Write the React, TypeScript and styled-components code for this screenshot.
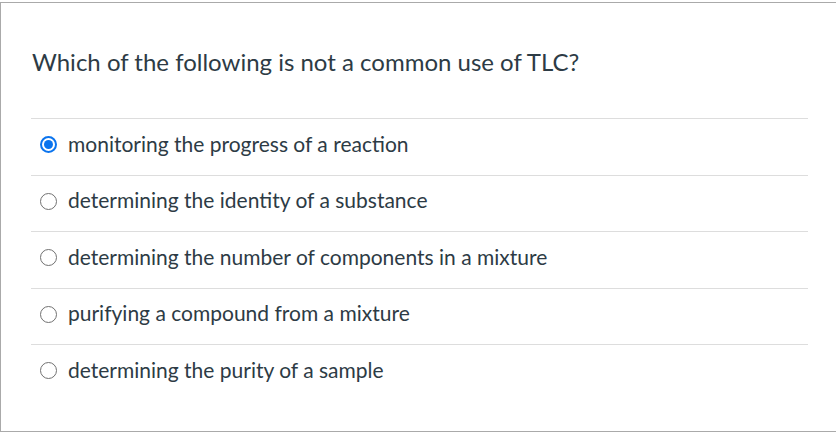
import React from "react";
import styled, { createGlobalStyle } from "styled-components";

const Global = createGlobalStyle`
  html, body { margin: 0; padding: 0; background: #ffffff; }
  body { font-family: Lato, "Open Sans", sans-serif; color: #2d3b45; }
`;

const Page = styled.div`
  width: 836px;
  height: 440px;
  overflow: hidden;
  padding-top: 2px;
  box-sizing: border-box;
`;

const Card = styled.div`
  width: 860px;
  height: 430px;
  box-sizing: border-box;
  border-top: 1px solid #aaaaaa;
  border-left: 1px solid #aaaaaa;
  border-bottom: 1px solid #aaaaaa;
  padding: 0 0 0 30px;
`;

const Question = styled.div`
  font-size: 24px;
  line-height: 30px;
  padding: 44px 0 41px 1px;
`;

const Options = styled.ul`
  list-style: none;
  margin: 0;
  padding: 0;
  width: 777px;
`;

const Option = styled.li`
  display: flex;
  align-items: center;
  gap: 11px;
  height: 56.5px;
  border-top: 1px solid #dddddd;
  padding: 0 0 6px 8px;
  box-sizing: border-box;
  font-size: 21px;
`;

const RadioSlot = styled.span`
  width: 18px;
  height: 18px;
  display: flex;
  align-items: center;
  justify-content: center;
  flex: none;
  margin-top: 2px;
`;

const Radio = styled.span<{ $checked?: boolean }>`
  width: 17px;
  height: 17px;
  box-sizing: border-box;
  border-radius: 50%;
  border: ${(p) => (p.$checked ? "2px solid #0b74ee" : "1.5px solid #717171")};
  display: flex;
  align-items: center;
  justify-content: center;
  &::after {
    content: "";
    display: ${(p) => (p.$checked ? "block" : "none")};
    width: 9px;
    height: 9px;
    border-radius: 50%;
    background: #0b74ee;
  }
`;

const Label = styled.span`
  line-height: 24px;
`;

const options = [
  "monitoring the progress of a reaction",
  "determining the identity of a substance",
  "determining the number of components in a mixture",
  "purifying a compound from a mixture",
  "determining the purity of a sample",
];

export default function App() {
  return (
    <Page>
      <Global />
      <Card>
        <Question>Which of the following is not a common use of TLC?</Question>
        <Options>
          {options.map((o, i) => (
            <Option key={o}>
              <RadioSlot>
                <Radio $checked={i === 0} />
              </RadioSlot>
              <Label>{o}</Label>
            </Option>
          ))}
        </Options>
      </Card>
    </Page>
  );
}
